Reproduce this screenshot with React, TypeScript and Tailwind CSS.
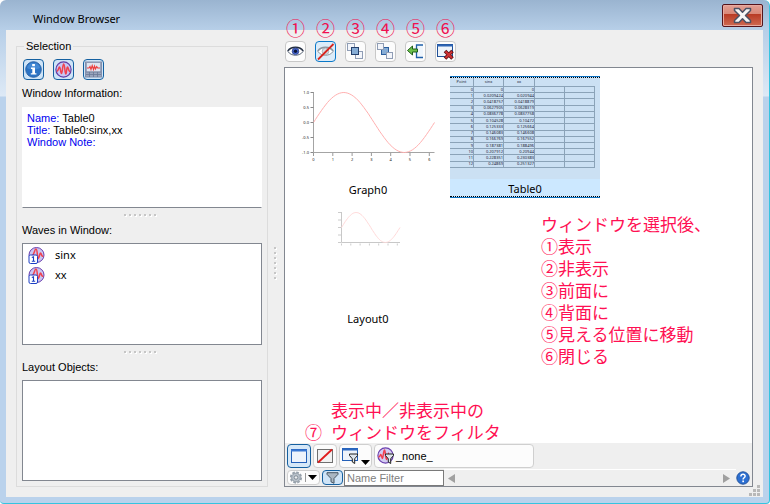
import React from "react";

const UI_FONT = "font-['Noto_Sans','Noto_Sans_CJK_JP',sans-serif]";
const LABEL = "font-['Liberation_Sans',sans-serif] text-[11px] leading-4";

/* ---------- icons ---------- */

function InfoIcon() {
  return (
    <svg width="17" height="17" viewBox="0 0 17 17" aria-hidden="true">
      <circle cx="8.500" cy="8.500" r="7.800" fill="#2b73c4" stroke="#2f66a8" />
      <path d="M2 7a6.700 6.700 0 0 1 13 0C11 9 6 9 2 7Z" fill="#4288d4" />
      <rect x="7.200" y="3" width="2.700" height="2.200" fill="#fff" />
      <path d="M6 6.500h4v5.700h1.400v1.400H5.800v-1.400h1.500V7.900H6Z" fill="#fff" />
    </svg>
  );
}

function WaveIcon() {
  return (
    <svg width="17" height="17" viewBox="0 0 17 17" aria-hidden="true">
      <circle cx="8.500" cy="8.500" r="7.600" fill="#c9c6f2" stroke="#5f3ba6" strokeWidth="1.200" />
      <path d="M1.800 10.500C3.500 10.500 3.500 6 4.500 6s1 6.500 2 6.500S7.500 3 8.700 3s1.100 10 2.100 10S11.500 6 12.500 6s.8 4.500 2.700 4.500" fill="none" stroke="#f0414e" strokeWidth="1.500" />
    </svg>
  );
}

function GraphPanelIcon() {
  return (
    <svg width="17" height="17" viewBox="0 0 17 17" aria-hidden="true">
      <rect x=".5" y="1" width="16" height="15" fill="#9aa5be" stroke="#8490ac" />
      <rect x="2" y="2" width="13" height="8.500" fill="#dfe4f0" />
      <path d="M2 7h2l1-1.500 1 3 1.200-4 1.300 4 1-3.500 1 3 1.200-2.500 1 1.500H15" fill="none" stroke="#ee3a3a" strokeWidth="1.100" />
      <path d="M1 11h15M1 13.500h15M4.500 11v5M8.500 11v5M12.500 11v5" stroke="#6b7896" strokeWidth=".8" />
    </svg>
  );
}

function WaveOneIcon() {
  return (
    <svg width="17" height="17" viewBox="0 0 17 17" aria-hidden="true">
      <circle cx="8.500" cy="8" r="7.500" fill="#c9c6f2" stroke="#6a3fae" />
      <path d="M4 8.500C6 8.500 6.500 2 8 2s1.200 9.500 2.300 9.500S11.500 6 12.500 6s.8 4 2.700 3" fill="none" stroke="#f0414e" strokeWidth="1.500" />
      <rect x="1" y="8" width="8.500" height="8.500" rx="1.500" fill="#fff" stroke="#1c3fc4" />
      <path d="M3.800 10.500 5.500 9.800V14M3.800 14.200h3.400" fill="none" stroke="#1c3fc4" strokeWidth="1.100" />
    </svg>
  );
}

function EyeIcon({ hidden = false }: { hidden?: boolean }) {
  return (
    <svg width="19" height="19" viewBox="0 0 19 19" aria-hidden="true">
      <path d="M2 9.500C5 4.200 14 4.200 17 9.500c-3 5-12 5-15 0Z" fill="#fff" stroke={hidden ? "#8d949c" : "#5a6678"} />
      <path d="M1.700 9C5 3.800 14 3.800 17.300 9" fill="none" stroke={hidden ? "#8d949c" : "#1e2a3d"} strokeWidth="1.300" />
      <circle cx="9.500" cy="9.300" r="3.300" fill={hidden ? "#d6dde4" : "#4466d0"} stroke={hidden ? "#9aa4ae" : "#2b3f86"} strokeWidth=".8" />
      {!hidden && <circle cx="9.500" cy="9.300" r="1.700" fill="#0c1538" />}
      {hidden && <path d="M2 17.500 17.500 2" stroke="#d8251f" strokeWidth="1.800" />}
    </svg>
  );
}

function FrontIcon() {
  return (
    <svg width="19" height="19" viewBox="0 0 19 19" aria-hidden="true">
      <rect x="1.500" y="1.500" width="7" height="7" fill="#f3f5fa" stroke="#8f9db5" />
      <rect x="9.500" y="9.500" width="7" height="7" fill="#f3f5fa" stroke="#8f9db5" />
      <rect x="5.500" y="5.500" width="7" height="7" fill="#86add6" stroke="#24406c" />
    </svg>
  );
}

function BackIcon() {
  return (
    <svg width="19" height="19" viewBox="0 0 19 19" aria-hidden="true">
      <rect x="5.500" y="5.500" width="7" height="7" fill="#86add6" stroke="#2c5f9e" />
      <rect x="1.500" y="1.500" width="6" height="6" fill="#f3f5fa" stroke="#8f9db5" />
      <rect x="10.500" y="10.500" width="6" height="6" fill="#f3f5fa" stroke="#8f9db5" />
    </svg>
  );
}

function MoveIcon() {
  return (
    <svg width="19" height="19" viewBox="0 0 19 19" aria-hidden="true">
      <path d="M17 3h-7v12.500h7" fill="#eef5fc" />
      <path d="M17 3h-6.500v12.500H17" fill="none" stroke="#1f5fa8" strokeWidth="1.300" />
      <path d="M1.500 8.500 6.500 4v3h5v3h-5v3Z" fill="#6cc04a" stroke="#1f5f1b" />
    </svg>
  );
}

function CloseWindowIcon() {
  return (
    <svg width="19" height="19" viewBox="0 0 19 19" aria-hidden="true">
      <rect x="1.500" y="2.500" width="15" height="12" fill="#edf3fa" stroke="#1f4f96" />
      <path d="M1 3.500h16" stroke="#2d64b4" strokeWidth="2" />
      <path d="m9 9 7.500 7.500m0-7.500L9 16.500" stroke="#5e1114" strokeWidth="3.600" />
      <path d="m9.500 9.500 6.500 6.500m0-6.500-6.500 6.500" stroke="#cf2f33" strokeWidth="1.900" />
    </svg>
  );
}

function WindowIcon() {
  return (
    <svg width="18" height="16" viewBox="0 0 18 16" aria-hidden="true">
      <rect x="1.500" y="1.500" width="15" height="13" fill="#eef3fb" stroke="#2460b8" />
      <path d="M1 2.500h16" stroke="#3a78d4" strokeWidth="2" />
    </svg>
  );
}

function HiddenWindowIcon() {
  return (
    <svg width="18" height="16" viewBox="0 0 18 16" aria-hidden="true">
      <rect x="1.500" y="1.500" width="15" height="13" fill="#f2f2f2" stroke="#6f6f6f" />
      <path d="M2 14.500 16 1.500" stroke="#e01c1c" strokeWidth="1.800" />
    </svg>
  );
}

function FunnelPath() {
  return <path d="M0 0h8v1.500L5.200 4.800V9.500L2.800 8V4.800L0 1.500Z" fill="#dfe5ec" stroke="#222" />;
}

function FilterWindowIcon() {
  return (
    <svg width="19" height="18" viewBox="0 0 19 18" aria-hidden="true">
      <rect x="1.500" y="1.500" width="15" height="12" fill="#eef3fb" stroke="#2460b8" />
      <path d="M1 2.500h16" stroke="#2d68c0" strokeWidth="2" />
      <g transform="translate(8.500 7)">
        <FunnelPath />
      </g>
    </svg>
  );
}

function FilterWaveIcon() {
  return (
    <svg width="18" height="18" viewBox="0 0 18 18" aria-hidden="true">
      <circle cx="8.500" cy="8.500" r="7.600" fill="#d3cdf3" stroke="#6a3fae" strokeWidth="1.200" />
      <path d="M1.500 10c1.800 0 1.500-2.500 2.300-2.500s.9 4 1.600 4S6.500 3 7.500 3s1 9.500 2 9.500S11 6 12 6" fill="none" stroke="#f0414e" strokeWidth="1.500" />
      <g transform="translate(8.500 7)">
        <FunnelPath />
      </g>
    </svg>
  );
}

function GearIcon() {
  return (
    <svg width="14" height="13" viewBox="0 0 14 14" aria-hidden="true">
      <circle cx="7" cy="7" r="5.700" fill="none" stroke="#98a2ac" strokeWidth="1.800" strokeDasharray="2.900 1.500" />
      <circle cx="7" cy="7" r="4.700" fill="#b7c0c9" stroke="#8b96a1" />
      <circle cx="7" cy="7" r="1.900" fill="#eef0f2" stroke="#7d8893" />
    </svg>
  );
}

function FunnelIcon() {
  return (
    <svg width="13" height="12" viewBox="0 0 13 12" aria-hidden="true">
      <path d="M1 .7h11v1.600L8 6.500v4.800L5 9.800V6.500L1 2.300Z" fill="#a9b6c2" stroke="#485663" />
    </svg>
  );
}

function DownTriangle() {
  return (
    <svg width="9" height="5" viewBox="0 0 9 5" aria-hidden="true">
      <path d="M0 0h9L4.500 5Z" fill="#000" />
    </svg>
  );
}

function HelpIcon() {
  return (
    <svg width="14" height="14" viewBox="0 0 14 14" aria-hidden="true">
      <circle cx="7" cy="7" r="6.200" fill="#2c6fd2" stroke="#24549c" />
      <path d="M4.900 5.400c0-3 4.400-2.800 4.200-.2C9 6.800 7.100 6.700 7.100 8.500" fill="none" stroke="#fff" strokeWidth="1.500" />
      <rect x="6.300" y="9.500" width="1.700" height="1.700" fill="#fff" />
    </svg>
  );
}

/* ---------- thumbnails ---------- */

function sinePath(x0: number, width: number, mid: number, amp: number) {
  const points: string[] = [];
  for (let i = 0; i <= 60; i++) {
    const t = (i / 60) * Math.PI * 2;
    points.push(`${(x0 + (width * i) / 60).toFixed(1)} ${(mid - amp * Math.sin(t)).toFixed(1)}`);
  }
  return "M" + points.join("L");
}

function GraphThumb() {
  return (
    <svg width="150" height="105" viewBox="0 0 150 105" aria-hidden="true">
      <path d="M20.500 16v60.500h121" fill="none" stroke="#a4a4a4" />
      <path d={sinePath(20.5, 121, 46.5, 30)} fill="none" stroke="#ffb0b0" />
      {["1.0", "0.5", "0.0", "-0.5", "-1.0"].map((t, i) => (
        <g key={t}>
          <path d={`M17.500 ${16.5 + i * 15}h3`} stroke="#888" />
          <text x="16" y={18 + i * 15} textAnchor="end" fontSize="4" fill="#222">{t}</text>
        </g>
      ))}
      {[0, 1, 2, 3, 4, 5, 6].map((n) => (
        <g key={n}>
          <path d={`M${20.5 + n * 19.3} 77v3`} stroke="#999" />
          <text x={20.5 + n * 19.3} y="85" textAnchor="middle" fontSize="4" fill="#222">{n}</text>
        </g>
      ))}
    </svg>
  );
}

function LayoutThumb() {
  return (
    <svg width="150" height="105" viewBox="0 0 150 105" aria-hidden="true">
      <path d="M48.500 7v30.500h58.500" fill="none" stroke="#c8c8c8" />
      <path d={sinePath(48.5, 58.5, 22.5, 15)} fill="none" stroke="#ffdada" />
      {[0, 1, 2, 3, 4].map((i) => (
        <path key={i} d={`M45 ${7.5 + i * 7.5}h3`} stroke="#cccccc" />
      ))}
      {[0, 1, 2, 3, 4, 5, 6].map((i) => (
        <path key={i} d={`M${48.5 + i * 9.3} 38.500v2`} stroke="#cccccc" />
      ))}
    </svg>
  );
}

const TABLE_ROWS = [
  ["0", "0", "0"],
  ["1", "0.0209424", "0.020944"],
  ["2", "0.0418757", "0.0418879"],
  ["3", "0.0627905", "0.0628319"],
  ["4", "0.0836778", "0.0837758"],
  ["5", "0.104528", "0.10472"],
  ["6", "0.125333", "0.125664"],
  ["7", "0.146083", "0.146608"],
  ["8", "0.166769", "0.167552"],
  ["9", "0.187381", "0.188496"],
  ["10", "0.207912", "0.20944"],
  ["11", "0.228351", "0.230383"],
  ["12", "0.24869", "0.251327"],
];

function TableThumb() {
  const cell = "border-r border-b border-[#8ba3b8] p-0 overflow-hidden";
  return (
    <div className="h-[101px] bg-[#cbe0f3]">
      <table className="h-[90px] w-[145px] table-fixed border-separate border-spacing-0 text-right text-[4px] leading-[4px] text-[#223]">
        <colgroup>
          <col className="w-[24px]" />
          <col className="w-[30px]" />
          <col className="w-[31px]" />
          <col className="w-[30px]" />
          <col className="w-[30px]" />
        </colgroup>
        <thead>
          <tr className="h-[9px] text-center">
            <th className={`${cell} font-normal`}>Point</th>
            <th className={`${cell} font-normal`}>sinx</th>
            <th className={`${cell} font-normal`}>xx</th>
            <td colSpan={2} className="border-b border-[#8ba3b8] p-0" />
          </tr>
        </thead>
        <tbody>
          {TABLE_ROWS.map((r) => (
            <tr key={r[0]}>
              <td className={cell}>{r[0]}</td>
              <td className={cell}>{r[1]}</td>
              <td className={cell}>{r[2]}</td>
              <td className={cell} />
              <td className={cell} />
            </tr>
          ))}
        </tbody>
      </table>
    </div>
  );
}

/* ---------- parts ---------- */

function Grip({ vertical = false }: { vertical?: boolean }) {
  return (
    <div className={`flex shrink-0 items-center justify-center gap-[3px] ${vertical ? "w-4 flex-col pt-2 pr-[2px]" : "h-[14px] pr-1"}`} aria-hidden="true">
      {[0, 1, 2, 3, 4, 5, 6].map((i) => (
        <span key={i} className="size-[2px] bg-[#c6c6c6] shadow-[1px_1px_0_#fff]" />
      ))}
    </div>
  );
}

function ModeButton({ label, children }: { label: string; children: React.ReactNode }) {
  return (
    <button type="button" aria-label={label} aria-pressed="true" className="flex size-[21px] items-center justify-center rounded-[4px] border border-[#1560a0] bg-[#cfe4f7]">
      {children}
    </button>
  );
}

const TOOLS = [
  { mark: "①", label: "表示", icon: <EyeIcon />, on: false },
  { mark: "②", label: "非表示", icon: <EyeIcon hidden />, on: true },
  { mark: "③", label: "前面に", icon: <FrontIcon />, on: false },
  { mark: "④", label: "背面に", icon: <BackIcon />, on: false },
  { mark: "⑤", label: "見える位置に移動", icon: <MoveIcon />, on: false },
  { mark: "⑥", label: "閉じる", icon: <CloseWindowIcon />, on: false },
];

const NOTE = "pointer-events-none absolute font-['Noto_Sans_CJK_JP',sans-serif] text-[17px] leading-[22px] text-[#ff1053] whitespace-nowrap";

export default function App() {
  return (
    <main
      className={`flex h-screen flex-col rounded-t-[6px] rounded-b-[4px] border-r border-b border-[#35c4e0] bg-[linear-gradient(#9ab4d0_0px,#b7cfe8_30px,#dde9f6_96px,#bad2ec_97px)] pr-[6px] pb-[6px] pl-[6px] text-black ${UI_FONT}`}
    >
      <header className="flex h-[30px] shrink-0 items-center justify-between pl-[27px]">
        <h1 className="pt-2 text-[11px] leading-4">Window Browser</h1>
        <button type="button" aria-label="Close" className="mt-px flex h-[23px] w-[41px] items-center justify-center rounded-[2px] border border-[#55141c] bg-[linear-gradient(#e3a095_0%,#d98878_42%,#b83a24_43%,#cf6a52_100%)] shadow-[inset_0_0_0_1px_#e8aaa0]">
          <svg width="19" height="17" viewBox="0 0 19 17" aria-hidden="true">
            <path d="M1.500 1.500h4.500l3.500 3.700L13 1.500h4.500v2L12.500 8.500l5 5v2H13L9.500 11.800 6 15.500H1.500v-2l5-5-5-5Z" fill="#f7f7f7" stroke="#4b5265" strokeWidth="1.500" strokeLinejoin="round" />
          </svg>
        </button>
      </header>

      <div className="flex min-h-0 flex-1 bg-[#efefef] pr-[10px] pb-[10px] pl-[10px]">
        {/* selection details */}
        <section aria-labelledby="selection" className="relative mt-4 flex w-[252px] shrink-0 flex-col border border-[#dcdcdc] px-[5px] pb-[5px]">
          <h2 id="selection" className={`absolute top-[-9px] left-[7px] bg-[#efefef] px-[2px] ${LABEL}`}>Selection</h2>
          <div className="mt-3 flex shrink-0 gap-[9px] pl-[1px]">
            <ModeButton label="Information"><InfoIcon /></ModeButton>
            <ModeButton label="Waves"><WaveIcon /></ModeButton>
            <ModeButton label="Objects"><GraphPanelIcon /></ModeButton>
          </div>
          <h3 className={`mt-[5px] mb-[6px] shrink-0 ${LABEL}`}>Window Information:</h3>
          <div className="min-h-0 flex-1 border border-white border-b-[#828790] bg-white">
            <div className="p-1 font-['Liberation_Sans',sans-serif] text-[11px] leading-3">
              <p><span className="text-[#0000f0]">Name:</span> Table0</p>
              <p><span className="text-[#0000f0]">Title:</span> Table0:sinx,xx</p>
              <p className="text-[#0000f0]">Window Note:</p>
            </div>
          </div>
          <Grip />
          <h3 id="waves" className={`mb-[5px] shrink-0 ${LABEL}`}>Waves in Window:</h3>
          <div className="min-h-0 flex-1 border border-[#828790] bg-white">
            <ul aria-labelledby="waves" className="pt-px pl-[5px]">
              {["sinx", "xx"].map((w) => (
                <li key={w} className="flex h-5 items-center gap-[10px] text-[11px] leading-4">
                  <WaveOneIcon />
                  {w}
                </li>
              ))}
            </ul>
          </div>
          <Grip />
          <h3 id="objects" className={`mb-[5px] shrink-0 ${LABEL}`}>Layout Objects:</h3>
          <ul aria-labelledby="objects" className="min-h-0 flex-1 border border-[#828790] bg-white" />
        </section>

        <Grip vertical />

        {/* window browser */}
        <section className="flex min-w-0 flex-1 flex-col">
          <div className="flex h-[37px] shrink-0 items-center gap-[9px] pt-[5px] pl-[1px]">
            {TOOLS.map((t) => (
              <div key={t.mark} className="relative">
                <span className="pointer-events-none absolute top-[-24px] left-[1px] font-['Noto_Sans_CJK_JP',sans-serif] text-[19px] leading-[22px] text-[#f0104f]">{t.mark}</span>
                <button
                  type="button"
                  aria-label={t.label}
                  className={`flex size-[21px] items-center justify-center rounded-[4px] border ${t.on ? "border-[#0a78c8] bg-[#dcecf9]" : "border-[#c8c8c8] bg-[#fcfcfc]"}`}
                >
                  {t.icon}
                </button>
              </div>
            ))}
          </div>

          <div className="relative flex min-h-0 flex-1 flex-col border border-[#828790] bg-white">
            <div role="listbox" aria-label="Windows" className="grid min-h-0 flex-1 grid-cols-[150px_150px] content-start gap-[7px] overflow-hidden p-2">
              <div role="option" aria-selected="false" className="h-[122px] text-center">
                <GraphThumb />
                <div className="text-[11px] leading-[18px]">Graph0</div>
              </div>
              <div role="option" aria-selected="true" className="flex h-[122px] flex-col justify-between border-y border-[#0a6fc0] bg-[#cce8ff] text-center">
                <div className="border-t border-dotted border-black">
                  <TableThumb />
                </div>
                <div className="border-b border-dotted border-black text-[11px] leading-[14px]">Table0</div>
              </div>
              <div role="option" aria-selected="false" className="h-[122px] text-center">
                <LayoutThumb />
                <div className="text-[11px] leading-[18px]">Layout0</div>
              </div>
            </div>

            <div className={`${NOTE} top-[145px] left-[256px]`}>
              <p>ウィンドウを選択後、</p>
              {TOOLS.map((t) => (
                <p key={t.mark}>{t.mark}{t.label}</p>
              ))}
            </div>
            <div className={`${NOTE} bottom-[43px] left-[20px] grid grid-cols-[26px_auto]`}>
              <p className="col-start-2">表示中／非表示中の</p>
              <p>⑦</p>
              <p>ウィンドウをフィルタ</p>
            </div>

            <div className="flex shrink-0 flex-col bg-[#efefef] px-[2px]">
              <div className="flex h-[26px] items-center gap-[2px]">
                <button type="button" aria-label="Visible windows" aria-pressed="true" className="flex h-6 w-6 items-center justify-center rounded-[4px] border border-[#1560a0] bg-[#d6e8f8]"><WindowIcon /></button>
                <button type="button" aria-label="Hidden windows" aria-pressed="false" className="flex h-6 w-6 items-center justify-center rounded-[4px] border border-[#cfcfcf] bg-[#fcfcfc]"><HiddenWindowIcon /></button>
                <button type="button" aria-label="Window types" className="flex h-6 w-[33px] items-end gap-px rounded-[4px] border border-[#cfcfcf] bg-[#fcfcfc] pb-[2px] pl-px"><FilterWindowIcon /><DownTriangle /></button>
                <button type="button" className="flex h-6 w-[160px] items-center gap-[1px] rounded-[4px] border border-[#cfcfcf] bg-[#fcfcfc] pl-[2px] font-['Liberation_Sans',sans-serif] text-[11px] leading-4"><FilterWaveIcon />_none_</button>
              </div>
              <div className="flex h-[17px] items-center">
                <button type="button" aria-label="Options" className="flex h-[15px] w-[33px] items-center gap-[2px] rounded-[4px] border border-[#cfcfcf] bg-[#fcfcfc] pl-[1px]">
                  <GearIcon />
                  <span className="h-[9px] w-px bg-[#999]" />
                  <DownTriangle />
                </button>
                <button type="button" aria-label="Filter" aria-pressed="true" className="ml-[2px] flex h-[15px] w-[21px] items-center justify-center rounded-[4px] border border-[#1560a0] bg-[#cfe4f7]"><FunnelIcon /></button>
                <input type="text" aria-label="Name Filter" placeholder="Name Filter" className="ml-[1px] h-4 w-[100px] border border-[#7a7a7a] bg-white px-[2px] font-['Liberation_Sans',sans-serif] text-[11px] leading-[14px] placeholder:text-[#808080]" />
                <div className="flex h-full flex-1 items-center justify-between border-t border-white pr-[6px] pl-[4px]" aria-hidden="true">
                  <svg width="7" height="9" viewBox="0 0 7 9"><path d="M7 0v9L0 4.500Z" fill="#a0a0a0" /></svg>
                  <svg width="7" height="9" viewBox="0 0 7 9"><path d="M0 0v9l7-4.500Z" fill="#a0a0a0" /></svg>
                </div>
                <button type="button" aria-label="Help"><HelpIcon /></button>
              </div>
            </div>
          </div>
        </section>
      </div>

      {/* resize handle in the corner of the client area */}
      <svg className="absolute right-[10px] bottom-[8px]" width="11" height="11" viewBox="0 0 11 11" aria-hidden="true">
        {[[8, 0], [4, 4], [8, 4], [0, 8], [4, 8], [8, 8]].map(([x, y]) => (
          <rect key={`${x}-${y}`} x={x} y={y} width="3" height="3" fill="#b8b8b8" />
        ))}
      </svg>
    </main>
  );
}
